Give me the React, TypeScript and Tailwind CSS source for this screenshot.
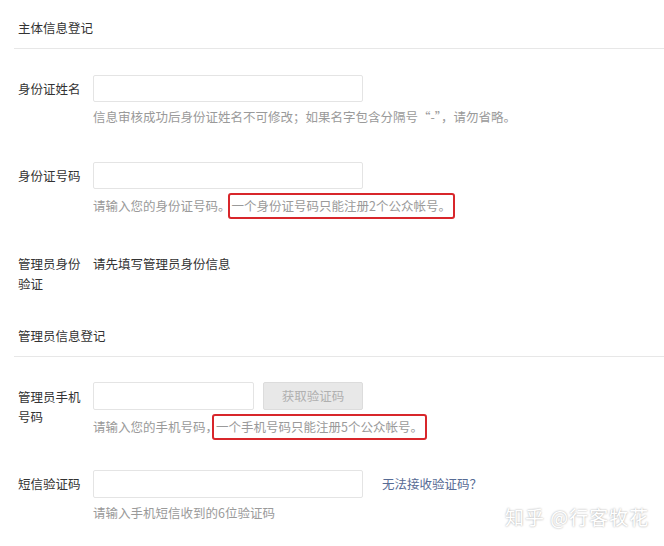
import React from 'react';

const font = "font-['Noto_Sans_CJK_SC','Microsoft_YaHei',sans-serif]";

const Label: React.FC<{ children: React.ReactNode }> = ({ children }) => (
  <div className="w-[79px] shrink-0 pl-[4px] text-[12.5px] leading-[20px] text-[#333]">{children}</div>
);

const Input: React.FC<{ w?: string }> = ({ w = 'w-[270px]' }) => (
  <div className={`${w} h-[28px] rounded-[2px] border border-[#e4e4e4] bg-white`} />
);

const Helper: React.FC<{ children: React.ReactNode }> = ({ children }) => (
  <div className="mt-[6px] text-[12.5px] leading-[18px] text-[#9a9a9a]">{children}</div>
);

const Marked: React.FC<{ children: React.ReactNode }> = ({ children }) => (
  <span className="inline-block rounded-[3px] border-2 border-[#d8262b] px-[2px] py-[2px] leading-[18px]">
    {children}
  </span>
);

const SectionTitle: React.FC<{ title: string; className?: string }> = ({ title, className = '' }) => (
  <div className={`border-b border-[#e7e7e7] pb-[11px] pl-[4px] text-[12.5px] leading-[18px] text-[#333] ${className}`}>
    {title}
  </div>
);

export default function App() {
  return (
    <div className={`relative h-[546px] w-[664px] overflow-hidden bg-white pl-[14px] ${font}`}>
      {/* 主体信息 */}
      <SectionTitle title="主体信息登记" className="pt-[19px]" />

      <div className="mt-[26px] flex">
        <div className="flex h-[27px] items-center">
          <Label>身份证姓名</Label>
        </div>
        <div>
          <div className="h-[27px] w-[270px] rounded-[2px] border border-[#e4e4e4]" />
          <Helper>信息审核成功后身份证姓名不可修改；如果名字包含分隔号“-”，请勿省略。</Helper>
        </div>
      </div>

      <div className="mt-[36px] flex">
        <div className="flex h-[27px] items-center">
          <Label>身份证号码</Label>
        </div>
        <div>
          <div className="h-[27px] w-[270px] rounded-[2px] border border-[#e4e4e4]" />
          <div className="mt-[4px] flex items-center text-[12.5px] leading-[18px] text-[#9a9a9a]">
            <span>请输入您的身份证号码。</span>
            <span className="-ml-[3px]">
              <Marked>一个身份证号码只能注册2个公众帐号。</Marked>
            </span>
          </div>
        </div>
      </div>

      <div className="mt-[35px] flex">
        <Label>
          管理员身份
          <br />
          验证
        </Label>
        <div className="text-[12.5px] leading-[20px] text-[#333]">请先填写管理员身份信息</div>
      </div>

      {/* 管理员信息 */}
      <SectionTitle title="管理员信息登记" className="mt-[33px]" />

      <div className="mt-[25px] flex">
        <div className="pt-[5px]">
          <Label>
            管理员手机
            <br />
            号码
          </Label>
        </div>
        <div>
          <div className="flex gap-[9px]">
            <Input w="w-[161px]" />
            <button className="h-[28px] w-[100px] rounded-[2px] border border-[#dcdcdc] bg-[#e8e8e8] text-[12.5px] text-[#b0b0b0]">
              获取验证码
            </button>
          </div>
          <div className="mt-[4px] flex items-center text-[12.5px] leading-[18px] text-[#9a9a9a]">
            <span>请输入您的手机号码，</span>
            <span className="-ml-[6px] bg-white">
              <Marked>一个手机号码只能注册5个公众帐号。</Marked>
            </span>
          </div>
        </div>
      </div>

      <div className="mt-[30px] flex">
        <div className="flex h-[28px] items-center">
          <Label>短信验证码</Label>
        </div>
        <div>
          <div className="flex items-center">
            <Input />
            <a className="ml-[19px] text-[12.5px] leading-[20px] text-[#576b95]">无法接收验证码？</a>
          </div>
          <Helper>请输入手机短信收到的6位验证码</Helper>
        </div>
      </div>

      {/* watermark */}
      <div className="absolute left-[505px] top-[505px] text-[19px] leading-[24px] tracking-[1px] text-white [text-shadow:0_0_2px_rgba(0,0,0,0.4)]">
        知乎 @行客牧花
      </div>
    </div>
  );
}
